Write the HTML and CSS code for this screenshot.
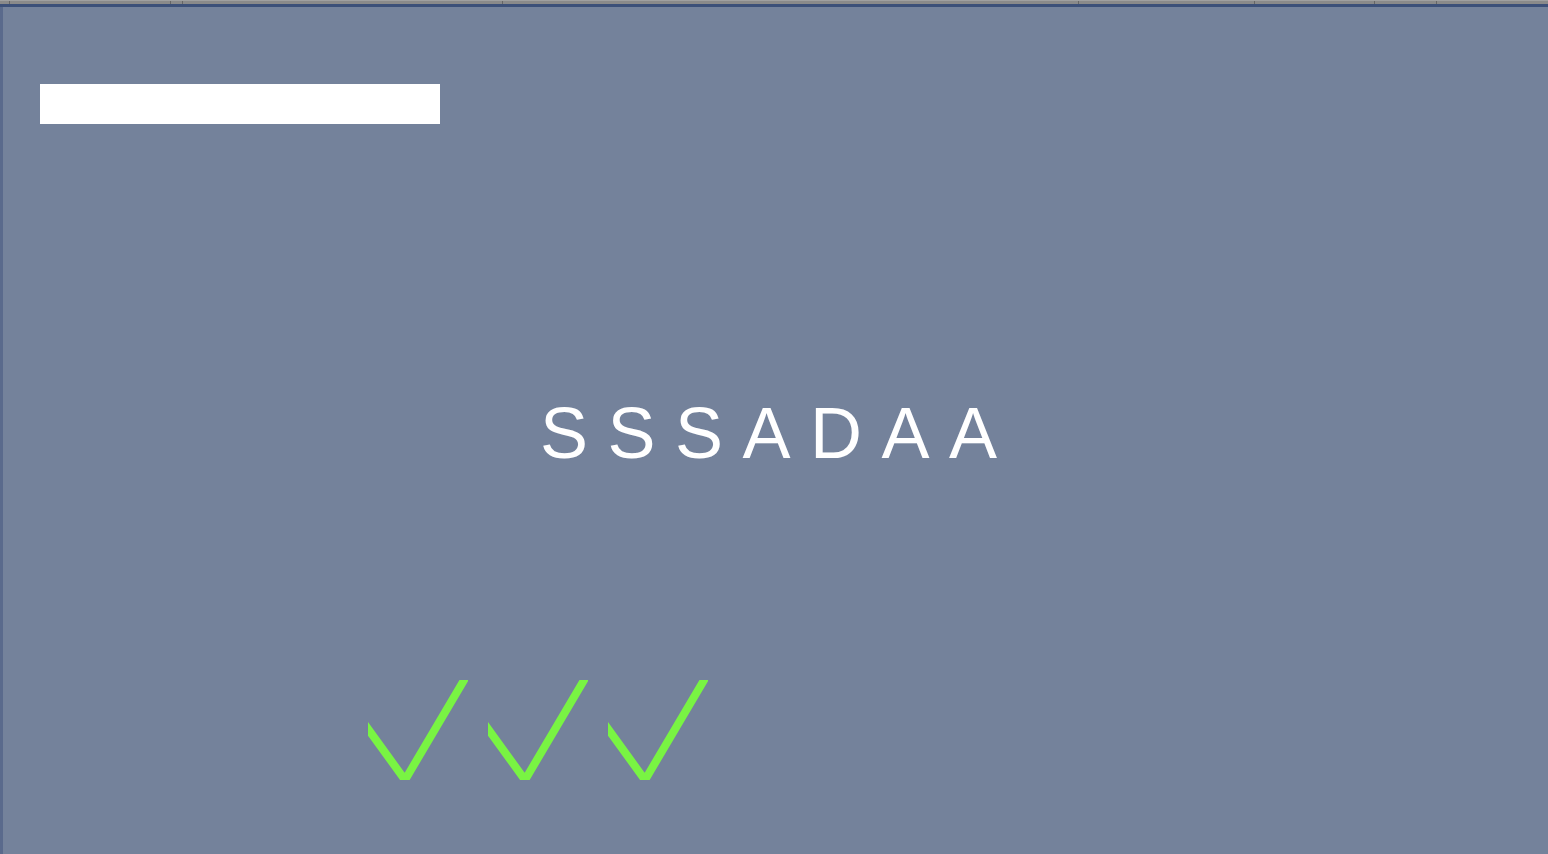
FILE: index.html
```html
<!DOCTYPE html>
<html lang="en">
<head>
<meta charset="utf-8">
<title>SSSADAA</title>
<link rel="stylesheet" href="styles.css">
</head>
<body>
<div class="frame">
  <div class="tabs">
    <span class="tab" style="width:10px"></span>
    <span class="tab" style="width:161px"></span>
    <span class="tab" style="width:12px"></span>
    <span class="tab" style="width:320px"></span>
    <span class="tab" style="width:576px"></span>
    <span class="tab" style="width:176px"></span>
    <span class="tab" style="width:120px"></span>
    <span class="tab" style="width:62px"></span>
    <span class="tab last"></span>
  </div>
  <div class="rule"></div>
  <div class="content">
    <div class="bar"></div>
    <div class="word">SSSADAA</div>
    <svg class="checks" width="360" height="120" viewBox="0 0 360 120" aria-hidden="true">
      <defs>
        <clipPath id="c1"><rect x="8" y="10" width="100" height="100"/></clipPath>
        <clipPath id="c2"><rect x="128" y="10" width="100" height="100"/></clipPath>
        <clipPath id="c3"><rect x="248" y="10" width="100" height="100"/></clipPath>
      </defs>
      <polyline clip-path="url(#c1)" class="tick" points="0,47.75 45,110 110,0"/>
      <polyline clip-path="url(#c2)" class="tick" points="120,47.75 165,110 230,0"/>
      <polyline clip-path="url(#c3)" class="tick" points="240,47.75 285,110 350,0"/>
    </svg>
  </div>
</div>
</body>
</html>
```
FILE: styles.css
```css
html, body {
  margin: 0;
  padding: 0;
  background: #74829b;
}
.frame {
  width: 1548px;
  height: 854px;
  display: flex;
  flex-direction: column;
  overflow: hidden;
  background: #74829b;
}
.tabs {
  height: 4px;
  display: flex;
  background: #8a8a8a;
  border-top: 1px solid #a0a0a0;
  box-sizing: border-box;
  flex: none;
}
.tab {
  display: block;
  height: 100%;
  box-sizing: border-box;
  border-right: 1px solid #666666;
  flex: none;
}
.tab.last {
  flex: 1;
  border-right: none;
}
.rule {
  height: 3px;
  background: #3c5079;
  flex: none;
}
.content {
  flex: 1;
  border-left: 3px solid #5a6a8c;
  padding: 77px 0 0 37px;
  display: flex;
  flex-direction: column;
  align-items: flex-start;
}
.bar {
  width: 400px;
  height: 40px;
  background: #ffffff;
}
.word {
  margin: 272.5px 0 0 500px;
  font-family: "Liberation Sans", Arial, sans-serif;
  font-size: 72px;
  line-height: 72px;
  letter-spacing: 19.5px;
  color: #ffffff;
  white-space: nowrap;
}
.checks {
  display: block;
  margin: 201.5px 0 0 320px;
}
.tick {
  fill: none;
  stroke: #79f443;
  stroke-width: 8;
  stroke-linejoin: miter;
  stroke-miterlimit: 10;
}
```
